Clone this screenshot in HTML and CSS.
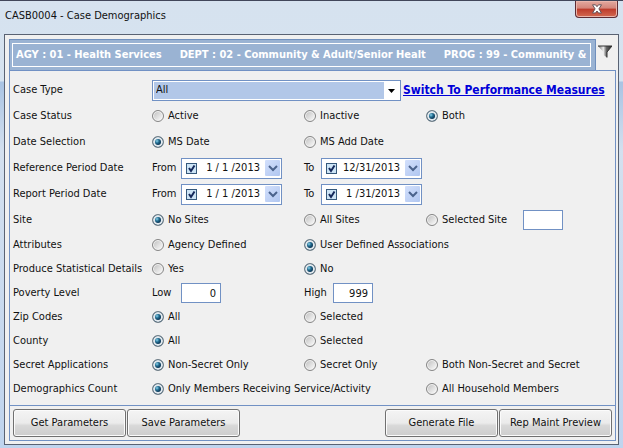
FILE: index.html
```html
<!DOCTYPE html>
<html lang="en">
<head>
<meta charset="utf-8">
<title>CASB0004 - Case Demographics</title>
<link rel="stylesheet" href="styles.css">
</head>
<body>
<div class="window">
  <header class="titlebar">
    <h1>CASB0004 - Case Demographics</h1>
    <button class="close" type="button" aria-label="Close">
      <svg viewBox="0 0 12 10" width="12" height="10"><path d="M1.5 .8h3L6 2.700 7.500 .8h3L7.900 4.900 10.500 9h-3L6 7 4.500 9h-3l2.600-4.100z" fill="#fff" stroke="#665258" stroke-width="1"/></svg>
    </button>
  </header>
  <main class="frame">
    <div class="context">
      <div class="context-bar">
        <div class="context-inner">
          <span>AGY : 01 - Health Services</span>
          <span>DEPT : 02 - Community &amp; Adult/Senior Healt</span>
          <span>PROG : 99 - Community &amp;</span>
        </div>
      </div>
      <button class="filter" type="button" aria-label="Filter">
        <svg viewBox="0 0 14 13" width="14" height="13">
          <defs><linearGradient id="funnel"><stop offset="0" stop-color="#666"/><stop offset=".38" stop-color="#eee"/><stop offset=".6" stop-color="#666"/><stop offset="1" stop-color="#222"/></linearGradient></defs>
          <path d="M0 1h14L9 7v5.500L5.500 10V7z" fill="url(#funnel)"/>
          <path d="M0 1h14L9 7v5.500" fill="none" stroke="#333" stroke-width="1"/>
        </svg>
      </button>
    </div>
    <form class="panel">
      <div class="fields">
        <div class="row">
          <label class="name" for="case-type">Case Type</label>
          <div class="wide type">
            <span class="combo">
              <select id="case-type"><option>All</option></select>
              <svg viewBox="0 0 7 4" width="7" height="4"><path d="M0 0h7L3.500 4z" fill="#000"/></svg>
            </span>
            <a href="#">Switch To Performance Measures</a>
          </div>
        </div>
        <div class="row">
          <span class="name">Case Status</span>
          <label class="option"><input type="radio" name="status">Active</label>
          <label class="option"><input type="radio" name="status">Inactive</label>
          <label class="option"><input type="radio" name="status" checked>Both</label>
        </div>
        <div class="row">
          <span class="name">Date Selection</span>
          <label class="option"><input type="radio" name="date" checked>MS Date</label>
          <label class="option"><input type="radio" name="date">MS Add Date</label>
        </div>
        <div class="row">
          <span class="name">Reference Period Date</span>
          <div class="range">
            <label for="ref-from">From</label>
            <span class="picker"><span class="check"><input type="checkbox" aria-label="Use reference start" checked><svg viewBox="0 0 11 11" width="11" height="11"><path d="M3 5l2 3 3.500-5.500" fill="none" stroke="#14285a" stroke-width="2"/></svg></span><input class="date" id="ref-from" type="text" value="1 / 1 /2013"><button type="button" aria-label="Open calendar"><svg viewBox="0 0 10 7" width="10" height="7"><path d="M1 1l4 4 4-4" fill="none" stroke="#4a628c" stroke-width="2"/></svg></button></span>
          </div>
          <div class="range to">
            <label for="ref-to">To</label>
            <span class="picker"><span class="check"><input type="checkbox" aria-label="Use reference end" checked><svg viewBox="0 0 11 11" width="11" height="11"><path d="M3 5l2 3 3.500-5.500" fill="none" stroke="#14285a" stroke-width="2"/></svg></span><input class="date" id="ref-to" type="text" value="12/31/2013"><button type="button" aria-label="Open calendar"><svg viewBox="0 0 10 7" width="10" height="7"><path d="M1 1l4 4 4-4" fill="none" stroke="#4a628c" stroke-width="2"/></svg></button></span>
          </div>
        </div>
        <div class="row">
          <span class="name">Report Period Date</span>
          <div class="range">
            <label for="rep-from">From</label>
            <span class="picker"><span class="check"><input type="checkbox" aria-label="Use report start" checked><svg viewBox="0 0 11 11" width="11" height="11"><path d="M3 5l2 3 3.500-5.500" fill="none" stroke="#14285a" stroke-width="2"/></svg></span><input class="date" id="rep-from" type="text" value="1 / 1 /2013"><button type="button" aria-label="Open calendar"><svg viewBox="0 0 10 7" width="10" height="7"><path d="M1 1l4 4 4-4" fill="none" stroke="#4a628c" stroke-width="2"/></svg></button></span>
          </div>
          <div class="range to">
            <label for="rep-to">To</label>
            <span class="picker"><span class="check"><input type="checkbox" aria-label="Use report end" checked><svg viewBox="0 0 11 11" width="11" height="11"><path d="M3 5l2 3 3.500-5.500" fill="none" stroke="#14285a" stroke-width="2"/></svg></span><input class="date" id="rep-to" type="text" value="1 /31/2013"><button type="button" aria-label="Open calendar"><svg viewBox="0 0 10 7" width="10" height="7"><path d="M1 1l4 4 4-4" fill="none" stroke="#4a628c" stroke-width="2"/></svg></button></span>
          </div>
        </div>
        <div class="row">
          <span class="name">Site</span>
          <label class="option"><input type="radio" name="site" checked>No Sites</label>
          <label class="option"><input type="radio" name="site">All Sites</label>
          <div class="site">
            <label class="option"><input type="radio" name="site">Selected Site</label>
            <input class="box" type="text" aria-label="Site code">
          </div>
        </div>
        <div class="row short">
          <span class="name">Attributes</span>
          <label class="option"><input type="radio" name="attr">Agency Defined</label>
          <label class="option"><input type="radio" name="attr" checked>User Defined Associations</label>
        </div>
        <div class="row short">
          <span class="name">Produce Statistical Details</span>
          <label class="option"><input type="radio" name="stats">Yes</label>
          <label class="option"><input type="radio" name="stats" checked>No</label>
        </div>
        <div class="row short">
          <span class="name">Poverty Level</span>
          <div class="range"><label for="low">Low</label><input class="box" id="low" type="text" value="0"></div>
          <div class="range"><label for="high">High</label><input class="box" id="high" type="text" value="999"></div>
        </div>
        <div class="row short">
          <span class="name">Zip Codes</span>
          <label class="option"><input type="radio" name="zip" checked>All</label>
          <label class="option"><input type="radio" name="zip">Selected</label>
        </div>
        <div class="row short">
          <span class="name">County</span>
          <label class="option"><input type="radio" name="county" checked>All</label>
          <label class="option"><input type="radio" name="county">Selected</label>
        </div>
        <div class="row short">
          <span class="name">Secret Applications</span>
          <label class="option"><input type="radio" name="secret" checked>Non-Secret Only</label>
          <label class="option"><input type="radio" name="secret">Secret Only</label>
          <label class="option"><input type="radio" name="secret">Both Non-Secret and Secret</label>
        </div>
        <div class="row short">
          <span class="name">Demographics Count</span>
          <label class="option double"><input type="radio" name="count" checked>Only Members Receiving Service/Activity</label>
          <label class="option"><input type="radio" name="count">All Household Members</label>
        </div>
      </div>
      <div class="actions">
        <button type="button">Get Parameters</button>
        <button type="button">Save Parameters</button>
        <button class="push" type="button">Generate File</button>
        <button type="button">Rep Maint Preview</button>
      </div>
    </form>
  </main>
</div>
</body>
</html>
```
FILE: styles.css
```css
* { box-sizing: border-box; }

body {
  margin: 0;
  color: #111;
  font: 11px/14px "DejaVu Sans Condensed", "Noto Sans", sans-serif;
}

button, input, select { margin: 0; padding: 0; font: inherit; color: inherit; }
svg { display: block; }

.window {
  min-height: 100vh;
  padding: 0 4px 3px;
  border-top: 1px solid #41465a;
  background: linear-gradient(#d6e2ef 0, #d6e3f0 80px, #a9c3e3 81px, #d3e0ef 150px, #bfd4ee 100%);
  display: flex;
  flex-direction: column;
}

.titlebar {
  display: flex;
  justify-content: space-between;
  align-items: flex-start;
  height: 33px;
}

.titlebar h1 { margin: 8px 0 0 1px; font: inherit; }

.close {
  display: grid;
  place-items: center;
  width: 43px;
  height: 17px;
  margin-right: 1px;
  border: 1px solid #5d2c34;
  border-top: 0;
  border-radius: 0 0 4px 4px;
  background: linear-gradient(#e3a99f 0, #d4857a 45%, #bd3b2b 50%, #d36a52 100%);
  box-shadow: inset 0 0 0 1px #eab5ab;
}

.frame {
  flex: 1;
  display: flex;
  flex-direction: column;
  padding: 4px 2px 3px 4px;
  border: 1px solid #596273;
  background: #f0f0f0;
}

.context { display: flex; align-items: center; }

.context-bar {
  flex: 1;
  min-width: 0;
  padding: 3px 4px 3px 2px;
  border: 1px solid #6f8fbd;
  border-bottom: 0;
  background: #9ab3d3;
}

.context-inner {
  display: flex;
  gap: 18px;
  padding: 4px 3px;
  overflow: hidden;
  white-space: nowrap;
  border: 1px solid #fff;
  color: #fff;
  font-weight: bold;
}

.filter {
  display: grid;
  justify-items: start;
  align-items: center;
  width: 20px;
  height: 20px;
  padding-left: 2px;
  margin-bottom: 6px;
  border: 0;
  background: none;
}

.panel {
  flex: 1;
  display: flex;
  flex-direction: column;
  border: 1px solid #7191c4;
}

.fields { flex: 1; padding: 6px 3px 4px; }

.row {
  display: grid;
  grid-template-columns: 139px 152px 122px 1fr;
  align-items: center;
  height: 26px;
  white-space: nowrap;
}

.short { height: 24px; }
.name { padding-bottom: 1px; }
.wide { grid-column: 2 / -1; }
.double { grid-column: span 2; }
.type { display: flex; align-items: center; gap: 2px; }

.type a {
  color: #0000d8;
  font-size: 12px;
  font-weight: bold;
}

.combo { position: relative; width: 249px; }
.combo svg { position: absolute; right: 6px; top: 9px; pointer-events: none; }

.combo select {
  display: block;
  width: 100%;
  height: 21px;
  padding-left: 3px;
  appearance: none;
  border: 1px solid #7191c4;
  border-radius: 0;
  box-shadow: inset 0 0 0 1px #fff;
  background: linear-gradient(to left, #fff 16px, #b2c7e8 16px);
}

.option { display: flex; align-items: center; gap: 4px; }

input[type="radio"] {
  flex: none;
  appearance: none;
  width: 12px;
  height: 12px;
  border: 1px solid #858585;
  border-radius: 50%;
  background: linear-gradient(135deg, #bdbdbd, #fff);
  box-shadow: inset 0 0 0 1px #f4f4f4;
}

input[type="radio"]:checked {
  background: radial-gradient(circle at 4px 4px, #8bd4ed 0, #236d91 2px, #0b3656 4px);
  border-color: #6d7c86;
  box-shadow: inset 0 0 0 2px #e2e9ee;
}

.range { display: flex; align-items: center; gap: 2px; }
.range label { width: 27px; padding-bottom: 1px; }
.range.to label { width: 15px; }

.picker {
  display: flex;
  align-items: center;
  width: 101px;
  height: 21px;
  padding: 1px 1px 1px 4px;
  border: 1px solid #7191c4;
  background: #fff;
}

.check { position: relative; flex: none; }
.check svg { position: absolute; inset: 0; display: none; pointer-events: none; }
.check input:checked + svg { display: block; }

.check input {
  display: block;
  appearance: none;
  width: 11px;
  height: 11px;
  border: 1px solid #36597b;
  background: #cde4f5;
}

.date {
  flex: 1;
  min-width: 0;
  padding-right: 5px;
  border: 0;
  background: none;
  text-align: right;
}

.picker button {
  display: grid;
  place-items: center;
  width: 15px;
  height: 16px;
  border: 0;
  border-radius: 1px;
  background: linear-gradient(135deg, #d3e0fc, #b0c6f0);
}

.box {
  width: 40px;
  height: 20px;
  padding-right: 4px;
  border: 1px solid #7191c4;
  background: #fff;
  text-align: right;
}

.site { display: flex; align-items: center; gap: 16px; }

.actions {
  display: flex;
  gap: 1px;
  padding: 3px;
  border-top: 1px solid #7191c4;
}

.actions button {
  width: 113px;
  height: 28px;
  border: 1px solid #707070;
  border-radius: 3px;
  background: linear-gradient(#f4f4f4 0, #ebebeb 50%, #d8d8d8 60%, #cdcdcd 100%);
  box-shadow: inset 0 0 0 1px #fbfbfb;
}

.actions .push { margin-left: auto; }
```
